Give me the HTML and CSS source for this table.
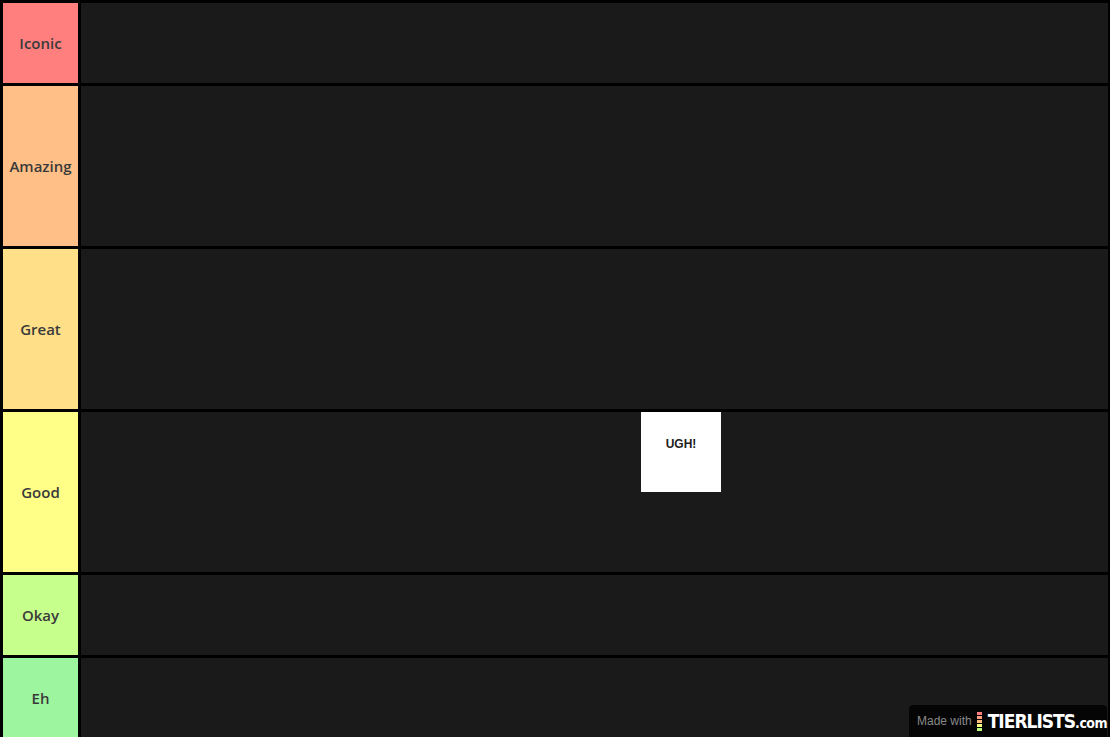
FILE: index.html
```html
<!DOCTYPE html>
<html>
<head>
<meta charset="utf-8">
<link rel="stylesheet" href="styles.css">
</head>
<body>
<div class="board">
  <div class="row r-s h1"><div class="label">Iconic</div><div class="items"></div></div>
  <div class="row r-a h2"><div class="label">Amazing</div><div class="items"></div></div>
  <div class="row r-b h2"><div class="label">Great</div><div class="items"></div></div>
  <div class="row r-c h2"><div class="label">Good</div><div class="items"><div class="card offset7"><span>UGH!</span></div></div></div>
  <div class="row r-d h1"><div class="label">Okay</div><div class="items"></div></div>
  <div class="row r-e h1"><div class="label">Eh</div><div class="items"></div></div>
</div>
<div class="mark">
  <span class="made">Made with</span>
  <span class="logo-bar"><i class="c1"></i><i class="c2"></i><i class="c3"></i><i class="c4"></i><i class="c5"></i></span>
  <span class="brand">TIERLISTS<span class="dot">.com</span></span>
</div>
</body>
</html>
```
FILE: styles.css
```css
html, body {
  margin: 0;
  padding: 0;
  background: #000;
  width: 1110px;
  height: 737px;
  overflow: hidden;
}
.board {
  display: flex;
  flex-direction: column;
  gap: 3px;
  padding: 3px 2px 0 3px;
}
.row {
  display: flex;
  gap: 3px;
}
.h1 { height: 80px; }
.h2 { height: 160px; }
.label {
  width: 75px;
  flex: none;
  display: flex;
  align-items: center;
  justify-content: center;
  font-family: "Open Sans", "Noto Sans", sans-serif;
  font-size: 15px;
  font-weight: 600;
  color: #3a3a3a;
}
.items {
  flex: 1;
  background: #1a1a1a;
  display: flex;
  align-items: flex-start;
}
.r-s .label { background: #ff7f7f; }
.r-a .label { background: #ffbf86; }
.r-b .label { background: #ffdf88; }
.r-c .label { background: #ffff88; }
.r-d .label { background: #c6ff8c; }
.r-e .label { background: #9ef5a0; }
.card {
  width: 80px;
  height: 80px;
  background: #fff;
  display: flex;
  justify-content: center;
  padding-top: 25px;
  box-sizing: border-box;
}
.offset7 { margin-left: 560px; }
.card span {
  font-family: "Liberation Sans", Arial, sans-serif;
  font-weight: bold;
  font-size: 12px;
  color: #222;
}
.mark {
  position: absolute;
  left: 909px;
  top: 705px;
  width: 198px;
  height: 32px;
  background: #050505;
  border-radius: 4px 4px 0 0;
  display: flex;
  align-items: center;
  box-sizing: border-box;
  padding-left: 8px;
  white-space: nowrap;
}
.made {
  font-family: "Liberation Sans", Arial, sans-serif;
  font-size: 12px;
  color: #8a8a8a;
  margin-right: 5px;
}
.logo-bar {
  display: flex;
  flex-direction: column;
  gap: 1px;
  margin-right: 6px;
  margin-top: 1px;
}
.logo-bar i {
  display: block;
  width: 5px;
  height: 3px;
}
.c1 { background: #ff7f7f; }
.c2 { background: #ff9f7f; }
.c3 { background: #ffbf7f; }
.c4 { background: #ffff7f; }
.c5 { background: #bfff7f; }
.brand {
  font-family: "DejaVu Sans", sans-serif;
  font-stretch: condensed;
  font-weight: bold;
  font-size: 19px;
  color: #fff;
  letter-spacing: -1px;
}
.dot {
  font-size: 14px;
  letter-spacing: -0.5px;
}
```
